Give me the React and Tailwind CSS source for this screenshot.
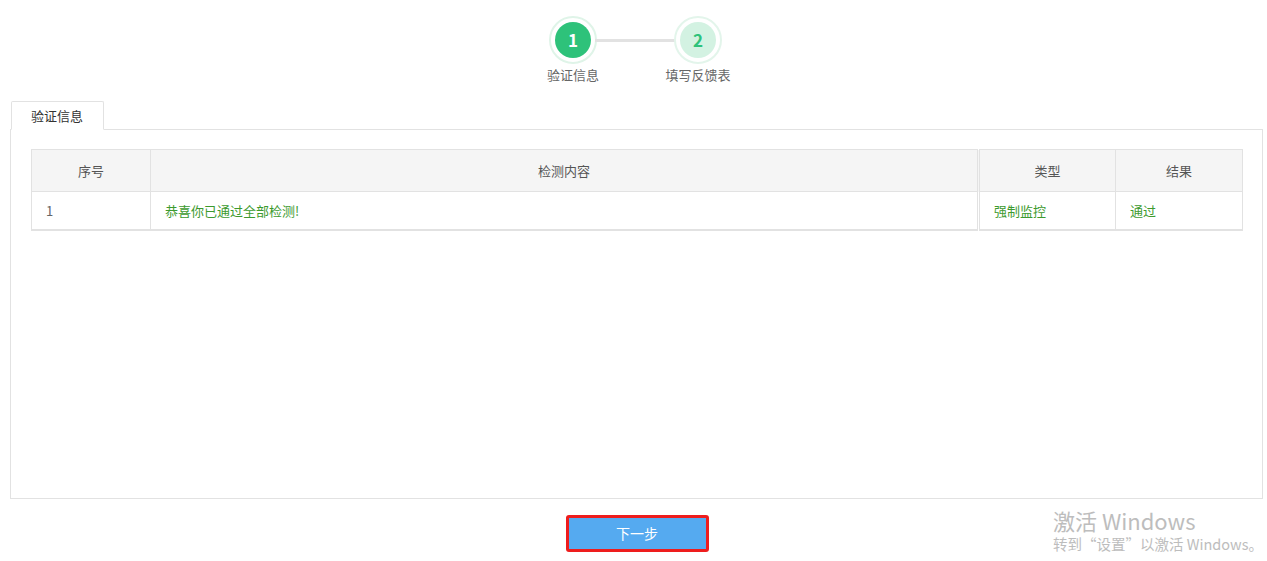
const font = { fontFamily: '"Noto Sans CJK SC", "Noto Sans", sans-serif' };

const rows = [
  { no: '1', content: '恭喜你已通过全部检测!', type: '强制监控', result: '通过' }
];

const Step = ({ num, label, active }) => (
  <div className="flex w-12 flex-col items-center">
    <div
      className={
        'flex h-12 w-12 items-center justify-center rounded-full border-[2px] ' +
        (active ? 'border-[#dff4e8] bg-white' : 'border-[#e3f5eb] bg-white')
      }
    >
      <div
        className={
          'flex h-[36px] w-[36px] items-center justify-center rounded-full text-[17px] font-bold ' +
          (active ? 'bg-[#2ec27a] text-white' : 'bg-[#d3f2e2] text-[#2ec27a]')
        }
      >
        {num}
      </div>
    </div>
    <span className="mt-[1px] whitespace-nowrap text-[13px] leading-5 text-[#666]">{label}</span>
  </div>
);

const App = () => {
  return (
    <div className="relative h-[561px] w-full overflow-hidden bg-white" style={font}>

      {/* STEPS */}
      <div className="flex justify-center pt-4">
        <div className="ml-[4px] flex items-start">
          <Step num="1" label="验证信息" active />
          <div className="mx-[-2px] mt-[22.5px] h-[3px] w-[81px] bg-[#e2e2e2]"></div>
          <Step num="2" label="填写反馈表" />
        </div>
      </div>

      {/* TABS + PANEL */}
      <div className="pl-[10px] pr-[4px] pt-[16px]">
        <div className="flex pl-[1px]">
          <div className="mb-[-1px] flex h-[29px] w-[93px] items-center rounded-t-[2px] border border-b-white border-[#e2e2e2] bg-white pl-[19px] text-[13px] text-[#333]">
            验证信息
          </div>
        </div>
        <div className="h-[370px] border border-[#e2e2e2] px-5 pt-[19px]">
          <table className="w-[1212px] border-collapse text-[13px]">
            <thead>
              <tr className="h-[42px] bg-[#f5f5f5] text-[#555]">
                <th className="w-[119px] border border-[#e2e2e2] font-normal">序号</th>
                <th className="w-[828px] border border-r-[3px] border-double border-[#e2e2e2] font-normal">检测内容</th>
                <th className="w-[137px] border border-[#e2e2e2] font-normal">类型</th>
                <th className="border border-[#e2e2e2] font-normal">结果</th>
              </tr>
            </thead>
            <tbody>
              {rows.map((row) => (
                <tr key={row.no} className="h-[38px]">
                  <td className="border border-b-2 border-[#e2e2e2] px-[14px] text-[#666]">{row.no}</td>
                  <td className="border border-b-2 border-r-[3px] border-double border-[#e2e2e2] px-[14px] text-[#3c9a2e]">{row.content}</td>
                  <td className="border border-b-2 border-[#e2e2e2] px-[14px] text-[#3c9a2e]">{row.type}</td>
                  <td className="border border-b-2 border-[#e2e2e2] px-[14px] text-[#3c9a2e]">{row.result}</td>
                </tr>
              ))}
            </tbody>
          </table>
        </div>
      </div>

      {/* BUTTON */}
      <div className="flex justify-center pt-[16px]">
        <button className="ml-[7px] h-[37px] w-[143px] rounded-[3px] border-[3px] border-[#ee1d1d] bg-[#55aaf0] text-[14px] text-white">
          下一步
        </button>
      </div>

      {/* WINDOWS WATERMARK */}
      <div className="absolute left-[1053px] top-[506px] text-[#bdbdbd]">
        <div className="text-[22px] leading-7">激活 Windows</div>
        <div className="text-[14.5px] leading-5">转到“设置”以激活 Windows。</div>
      </div>
    </div>
  );
};

export default App;
